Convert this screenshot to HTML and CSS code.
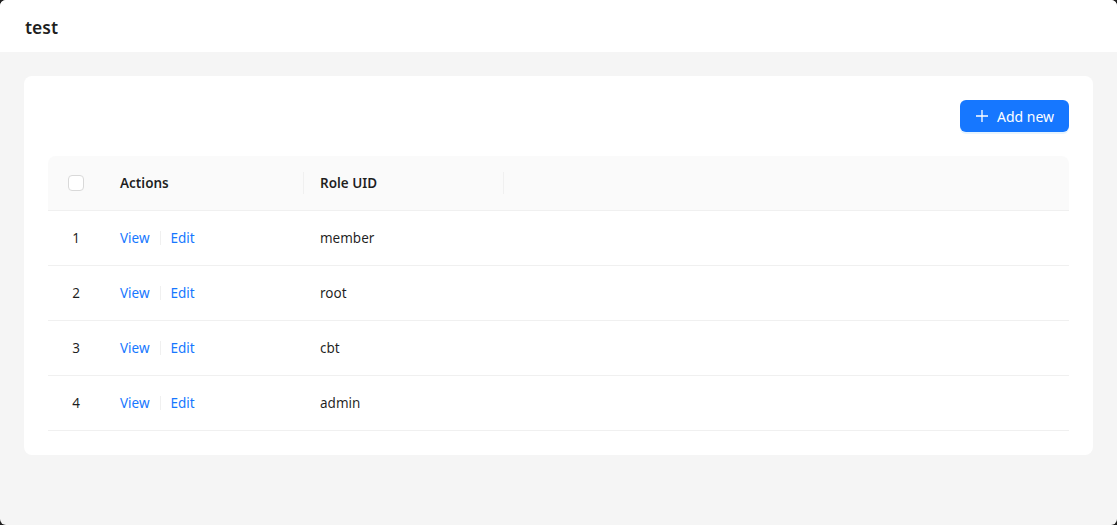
FILE: index.html
```html
<!DOCTYPE html>
<html>
<head>
<meta charset="utf-8">
<link rel="stylesheet" href="styles.css">
</head>
<body>
<div class="window">
  <header class="topbar"><h1 class="title">test</h1></header>
  <main class="content">
    <section class="card">
      <div class="toolbar">
        <button class="btn-primary">
          <svg class="plus" width="14" height="14" viewBox="0 0 14 14"><path d="M7 1v12M1 7h12" stroke="#fff" stroke-width="1.3" fill="none"/></svg>
          <span>Add new</span>
        </button>
      </div>
      <div class="table">
        <div class="row head">
          <div class="cell c-sel"><span class="checkbox"></span></div>
          <div class="cell c-act">Actions</div>
          <div class="cell c-uid">Role UID</div>
          <div class="cell c-rest"></div>
        </div>
        <div class="row">
          <div class="cell c-sel">1</div>
          <div class="cell c-act"><a class="link">View</a><span class="split"></span><a class="link">Edit</a></div>
          <div class="cell c-uid">member</div>
          <div class="cell c-rest"></div>
        </div>
        <div class="row">
          <div class="cell c-sel">2</div>
          <div class="cell c-act"><a class="link">View</a><span class="split"></span><a class="link">Edit</a></div>
          <div class="cell c-uid">root</div>
          <div class="cell c-rest"></div>
        </div>
        <div class="row">
          <div class="cell c-sel">3</div>
          <div class="cell c-act"><a class="link">View</a><span class="split"></span><a class="link">Edit</a></div>
          <div class="cell c-uid">cbt</div>
          <div class="cell c-rest"></div>
        </div>
        <div class="row">
          <div class="cell c-sel">4</div>
          <div class="cell c-act"><a class="link">View</a><span class="split"></span><a class="link">Edit</a></div>
          <div class="cell c-uid">admin</div>
          <div class="cell c-rest"></div>
        </div>
      </div>
    </section>
  </main>
</div>
</body>
</html>
```

FILE: styles.css
```css
html { background: #1f1f1f; }
body {
  margin: 0;
  font-family: "Noto Sans", "Open Sans", sans-serif;
  font-size: 13.5px;
  color: rgba(0,0,0,0.88);
}
.window {
  height: 525px;
  background: #f5f5f5;
  border-radius: 6px;
  overflow: hidden;
  display: flex;
  flex-direction: column;
}
.topbar {
  height: 52px;
  background: #fff;
  display: flex;
  align-items: center;
  padding: 0 25px;
  flex-shrink: 0;
}
.title {
  margin: 0;
  font-size: 17.5px;
  font-weight: 600;
  line-height: 1;
  padding-top: 3px;
}
.content { padding: 24px; }
.card {
  background: #fff;
  border-radius: 8px;
  padding: 24px;
}
.toolbar {
  display: flex;
  justify-content: flex-end;
  margin-bottom: 24px;
}
.btn-primary {
  height: 32px;
  width: 109px;
  border: 0;
  border-radius: 6px;
  background: #1677ff;
  color: #fff;
  font-family: inherit;
  font-size: 14px;
  white-space: nowrap;
  display: flex;
  align-items: center;
  justify-content: center;
  gap: 8px;
  padding: 0;
  box-shadow: 0 2px 0 rgba(5,145,255,0.1);
}
.plus { display: block; }
.table { display: flex; flex-direction: column; }
.row {
  display: flex;
  height: 55px;
  border-bottom: 1px solid #f0f0f0;
  box-sizing: border-box;
  align-items: center;
}
.row.head {
  background: #fafafa;
  font-weight: 600;
  border-radius: 8px 8px 0 0;
}
.cell {
  padding: 0 16px;
  box-sizing: border-box;
  height: 100%;
  display: flex;
  align-items: center;
  position: relative;
}
.c-sel { width: 56px; justify-content: center; }
.c-act { width: 200px; gap: 10px; }
.c-uid { width: 200px; }
.c-rest { flex: 1; }
.head .c-uid::before, .head .c-rest::before {
  content: "";
  position: absolute;
  left: -1px;
  top: 50%;
  height: 22px;
  margin-top: -11px;
  width: 1px;
  background: #f0f0f0;
}
.checkbox {
  width: 16px;
  height: 16px;
  box-sizing: border-box;
  border: 1px solid #d9d9d9;
  border-radius: 4px;
  background: #fff;
}
.link { color: #1677ff; cursor: pointer; }
.split {
  width: 1px;
  height: 14px;
  background: #f0f0f0;
}
```
